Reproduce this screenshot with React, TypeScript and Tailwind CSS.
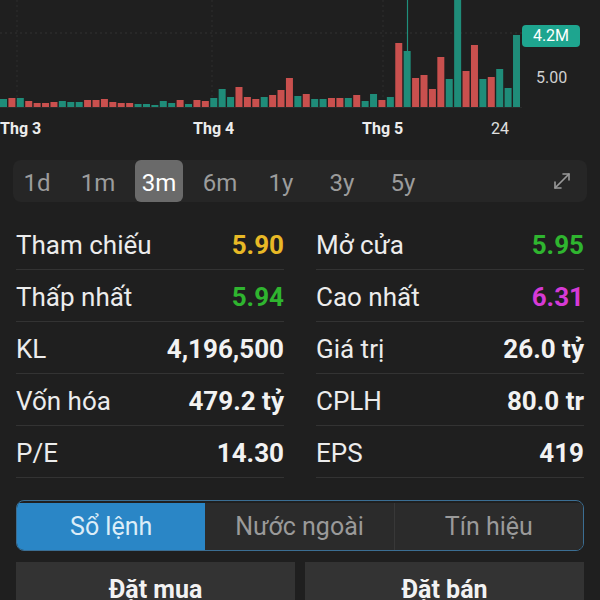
import { MoveDiagonal } from "lucide-react"

type Bar = [number, "t" | "r"]

// top y of each volume bar (base at 107), colour
const bars: Bar[] = [
  [99, "t"], [98, "r"], [98, "t"], [101, "r"], [103, "r"], [103, "r"], [102, "r"], [101, "t"],
  [102, "t"], [102, "t"], [100, "r"], [100, "r"], [99, "r"], [102, "r"], [103, "r"], [103, "r"],
  [104, "t"], [104, "t"], [105, "t"], [101, "t"], [103, "t"], [100, "r"], [104, "t"], [100, "r"],
  [101, "r"], [98, "t"], [89, "t"], [97, "t"], [87, "r"], [97, "r"], [99, "r"], [97, "t"],
  [95, "r"], [90, "r"], [78, "r"], [96, "t"], [94, "r"], [99, "t"], [99, "t"], [98, "r"],
  [98, "r"], [98, "t"], [95, "r"], [101, "t"], [94, "t"], [100, "r"], [97, "t"], [43, "r"],
  [51, "t"], [78, "r"], [75, "r"], [89, "r"], [57, "r"], [79, "t"], [0, "t"], [71, "r"],
  [45, "r"], [79, "t"], [77, "r"], [69, "t"], [88, "t"], [35, "t"],
]

const periods = ["1d", "1m", "3m", "6m", "1y", "3y", "5y"]

const stats: [string, string, string][] = [
  ["Tham chiếu", "5.90", "text-[#e8b926]"],
  ["Mở cửa", "5.95", "text-[#2fb52f]"],
  ["Thấp nhất", "5.94", "text-[#2fb52f]"],
  ["Cao nhất", "6.31", "text-[#d63ad6]"],
  ["KL", "4,196,500", "text-[#f2f2f2]"],
  ["Giá trị", "26.0 tỷ", "text-[#f2f2f2]"],
  ["Vốn hóa", "479.2 tỷ", "text-[#f2f2f2]"],
  ["CPLH", "80.0 tr", "text-[#f2f2f2]"],
  ["P/E", "14.30", "text-[#f2f2f2]"],
  ["EPS", "419", "text-[#f2f2f2]"],
]

function VolumeChart() {
  return (
    <div className="flex h-[112px]">
      <svg width="522" height="112" className="shrink-0">
        <line x1="0" y1="33" x2="522" y2="33" stroke="#333" strokeDasharray="2 3" />
        {[17, 212, 383].map((x) => (
          <line key={x} x1={x} y1="0" x2={x} y2="107" stroke="#2e2e2e" strokeDasharray="2 3" />
        ))}
        <line x1="407.5" y1="0" x2="407.5" y2="51" stroke="#1f8f7c" strokeWidth="1.2" />
        {bars.map(([top, c], i) => (
          <rect
            key={i}
            x={i * 8.41}
            y={top}
            width="7"
            height={107 - top}
            fill={c === "t" ? "#1f8c79" : "#c9504e"}
          />
        ))}
        <line x1="0" y1="107.5" x2="522" y2="107.5" stroke="#2a2a2a" />
      </svg>
      <div className="flex flex-col items-start pt-[25px]">
        <div className="h-[22px] w-[58px] rounded-sm bg-[#1ea58f] text-center text-[16px] leading-[22px] text-white">
          4.2M
        </div>
        <div className="mt-[20px] pl-[14px] text-[16px] leading-[22px] text-[#d0d0d0]">5.00</div>
      </div>
    </div>
  )
}

function AxisLabels() {
  return (
    <div className="relative h-[34px] text-[16px] leading-none">
      <span className="absolute left-0 top-[9px] font-bold text-[#ececec]">Thg 3</span>
      <span className="absolute left-[193px] top-[9px] font-bold text-[#ececec]">Thg 4</span>
      <span className="absolute left-[362px] top-[9px] font-bold text-[#ececec]">Thg 5</span>
      <span className="absolute left-[491px] top-[9px] text-[#e0e0e0]">24</span>
    </div>
  )
}

export default function App() {
  return (
    <div
      className="w-[600px] h-[600px] overflow-hidden bg-[#1f1f1f] text-white"
      style={{ fontFamily: "Roboto, 'Noto Sans', sans-serif" }}
    >
      <VolumeChart />
      <AxisLabels />

      <div className="mx-[13px] mt-[14px] flex h-[42px] items-center gap-[13px] rounded-lg bg-[#262626]">
        {periods.map((p) => (
          <div
            key={p}
            className={
              p === "3m"
                ? "flex h-[42px] w-[48px] items-center justify-center rounded-md bg-[#6a6a6a] pt-[4px] text-[24px] text-white"
                : "flex h-[42px] w-[48px] items-center justify-center pt-[4px] text-[24px] text-[#9c9c9c]"
            }
          >
            {p}
          </div>
        ))}
        <div className="ml-auto mr-[13px] text-[#9a9a9a]">
          <MoveDiagonal size={24} strokeWidth={1.6} />
        </div>
      </div>

      <div className="mt-[16px] grid grid-cols-2 gap-x-8 px-4">
        {stats.map(([label, value, color]) => (
          <div
            key={label}
            className="flex h-[52px] items-center justify-between border-b border-[#333333] pt-[3px] text-[26px]"
          >
            <span className="text-[#ececec]">{label}</span>
            <span className={`font-bold ${color}`}>{value}</span>
          </div>
        ))}
      </div>

      <div className="mx-4 mt-[22px] flex h-[51px] overflow-hidden rounded-lg border border-[#3b6e93] pt-[2px] text-[25px]">
        <div className="flex flex-1 items-center justify-center bg-[#2a86c6] text-[#dcedf8]">Sổ lệnh</div>
        <div className="flex flex-1 items-center justify-center bg-[#2b2b2b] text-[#9a9a9a]">Nước ngoài</div>
        <div className="flex flex-1 items-center justify-center border-l border-[#383838] bg-[#2b2b2b] text-[#9a9a9a]">
          Tín hiệu
        </div>
      </div>

      <div className="mx-4 mt-[11px] flex gap-[10px] text-[25px] font-bold text-[#f2f2f2]">
        <div className="flex h-[56px] flex-1 items-center justify-center bg-[#333333]">Đặt mua</div>
        <div className="flex h-[56px] flex-1 items-center justify-center bg-[#333333]">Đặt bán</div>
      </div>
    </div>
  )
}
